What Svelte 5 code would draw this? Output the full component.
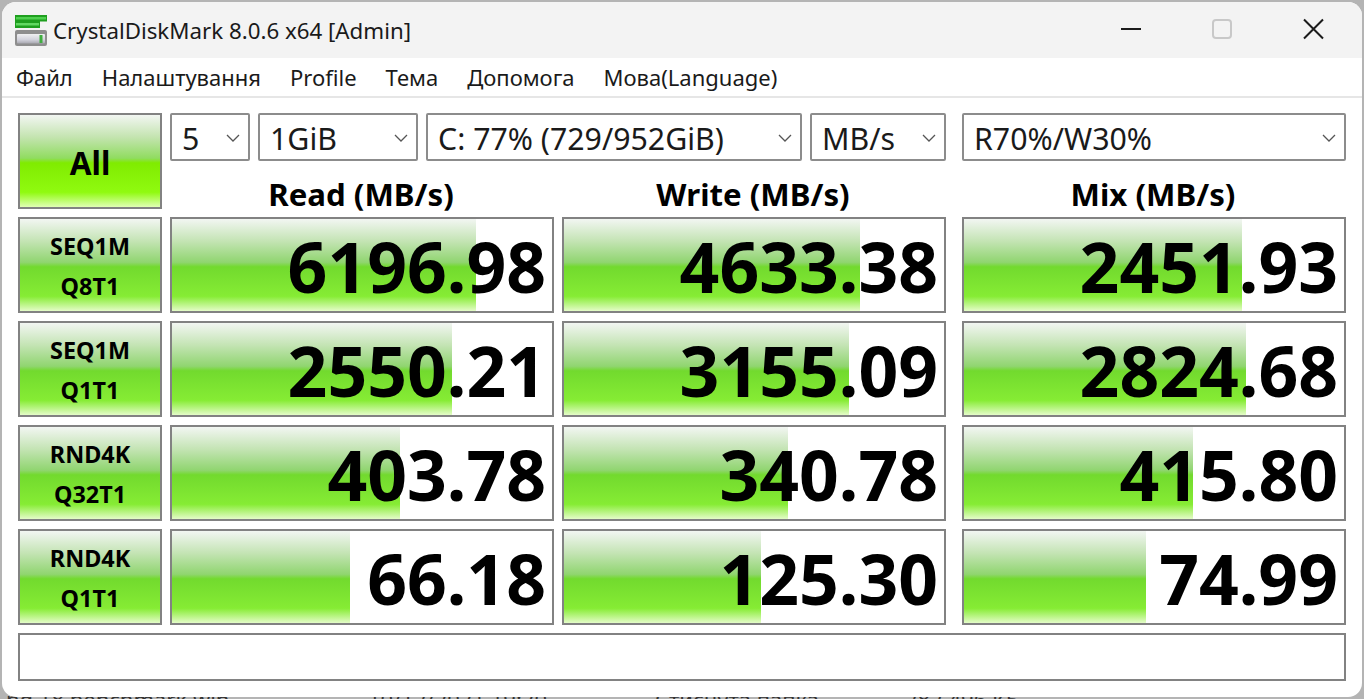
<script lang="ts">
  // CrystalDiskMark result window
  const menu = ["Файл", "Налаштування", "Profile", "Тема", "Допомога", "Мова(Language)"];

  const combos = [
    { label: "5", width: 80 },
    { label: "1GiB", width: 160 },
    { label: "C: 77% (729/952GiB)", width: 376 },
    { label: "MB/s", width: 136 },
  ];

  const rows = [
    { l1: "SEQ1M", l2: "Q8T1", cells: [{ v: "6196.98", bar: 304 }, { v: "4633.38", bar: 296 }, { v: "2451.93", bar: 278 }] },
    { l1: "SEQ1M", l2: "Q1T1", cells: [{ v: "2550.21", bar: 280 }, { v: "3155.09", bar: 285 }, { v: "2824.68", bar: 282 }] },
    { l1: "RND4K", l2: "Q32T1", cells: [{ v: "403.78", bar: 228 }, { v: "340.78", bar: 224 }, { v: "415.80", bar: 229 }] },
    { l1: "RND4K", l2: "Q1T1", cells: [{ v: "66.18", bar: 178 }, { v: "125.30", bar: 197 }, { v: "74.99", bar: 182 }] },
  ];
</script>

<div class="desktop">
  <div class="behind">
    <span class="b1">ng 18 benchmark win</span>
    <span class="b2">10/12/2021 19:20</span>
    <span class="b3">Стиснута папка</span>
    <span class="b4">282 496 КБ</span>
  </div>

  <div class="window">
    <header class="titlebar">
      <svg class="appicon" width="32" height="32" viewBox="0 0 32 32">
        <defs>
          <linearGradient id="disk" x1="0" y1="0" x2="0" y2="1">
            <stop offset="0" stop-color="#f0f0f2" />
            <stop offset="0.6" stop-color="#d2d2dc" />
            <stop offset="1" stop-color="#a8a8b0" />
          </linearGradient>
        </defs>
        <path d="M0 0h32v6.500h-7v6.500H0z" fill="#1f9f1f" />
        <rect x="1" y="2" width="30" height="2.500" fill="#4fd04f" />
        <rect x="1" y="8" width="23" height="2.500" fill="#62d862" />
        <rect x="0" y="15" width="32" height="16" rx="2" fill="#8e8e8e" />
        <rect x="2" y="19" width="28" height="9.500" rx="1" fill="url(#disk)" />
        <rect x="24.500" y="20" width="3" height="8" fill="#3fae3f" />
      </svg>
      <span class="title">CrystalDiskMark 8.0.6 x64 [Admin]</span>
      <div class="controls">
        <svg width="22" height="22" viewBox="0 0 22 22"><path d="M1 11h20" stroke="#1b1b1b" stroke-width="2" /></svg>
        <svg width="22" height="22" viewBox="0 0 22 22"><rect x="2" y="2" width="18" height="18" rx="3" fill="none" stroke="#c8c8c8" stroke-width="2" /></svg>
        <svg width="22" height="22" viewBox="0 0 22 22"><path d="M2 1.500l19 19M21 1.500l-19 19" stroke="#1b1b1b" stroke-width="2" fill="none" /></svg>
      </div>
    </header>

    <nav class="menubar">
      {#each menu as item}
        <span>{item}</span>
      {/each}
    </nav>

    <main class="body">
      <div class="grid top">
        <button class="green all"><span>All</span></button>
        <div class="combos">
          {#each combos as c}
            <div class="combo" style="width:{c.width}px">
              <span>{c.label}</span>
              <svg class="chev" width="14" height="8" viewBox="0 0 14 8"><path d="M1 1l6 6 6-6" fill="none" stroke="#555" stroke-width="1.3" /></svg>
            </div>
          {/each}
        </div>
        <div class="combo mix">
          <span>R70%/W30%</span>
          <svg class="chev" width="14" height="8" viewBox="0 0 14 8"><path d="M1 1l6 6 6-6" fill="none" stroke="#555" stroke-width="1.3" /></svg>
        </div>
        <div class="head">Read (MB/s)</div>
        <div class="head">Write (MB/s)</div>
        <div class="head mix">Mix (MB/s)</div>
      </div>

      {#each rows as row}
        <div class="grid">
          <button class="green label">
            <span>{row.l1}</span>
            <span>{row.l2}</span>
          </button>
          {#each row.cells as cell, i}
            <div class="cell" class:mix={i === 2}>
              <div class="bar" style="width:{cell.bar}px"></div>
              <span class="value">{cell.v}</span>
            </div>
          {/each}
        </div>
      {/each}

      <div class="comment"></div>
    </main>
  </div>
</div>

<style>
  :global(body) {
    margin: 0;
    background: #b4b4b4;
    overflow: hidden;
  }

  .desktop {
    position: relative;
    width: 1364px;
    height: 699px;
    padding: 2px;
    box-sizing: border-box;
    overflow: hidden;
    font-family: "Noto Sans", "Open Sans", sans-serif;
    color: #000;
  }

  .behind {
    position: absolute;
    left: 0;
    right: 0;
    top: 689px;
    font-size: 22px;
    line-height: 20px;
    color: #333;
  }
  .behind span {
    position: absolute;
    top: 0;
    white-space: nowrap;
  }
  .b1 { left: 6px; }
  .b2 { left: 368px; }
  .b3 { left: 655px; }
  .b4 { left: 905px; }

  .window {
    position: relative;
    width: 1360px;
    height: 695px;
    background: #fff;
    border-radius: 14px;
    overflow: hidden;
  }

  .titlebar {
    height: 56px;
    background: #f3f3f3;
    display: flex;
    align-items: center;
    padding-left: 13px;
    box-sizing: border-box;
  }
  .appicon {
    margin-right: 6px;
    margin-top: 1px;
  }
  .title {
    font-size: 22.3px;
    color: #1a1a1a;
    white-space: nowrap;
  }
  .controls {
    margin-left: auto;
    display: flex;
    gap: 69px;
    padding-right: 38px;
    margin-top: -2px;
  }

  .menubar {
    height: 40px;
    box-sizing: border-box;
    border-bottom: 2px solid #e6e6e6;
    display: flex;
    align-items: center;
    gap: 29px;
    padding-left: 14px;
    font-size: 22px;
    color: #1a1a1a;
    white-space: nowrap;
  }

  .body {
    padding: 15px 0 0 16px;
    display: flex;
    flex-direction: column;
    gap: 8px;
  }

  .grid {
    display: grid;
    grid-template-columns: 144px 384px 384px 392px;
    column-gap: 8px;
    height: 96px;
  }
  .grid.top {
    grid-template-rows: 48px 48px;
  }
  .mix {
    margin-left: 8px;
  }

  .green {
    box-sizing: border-box;
    border: 2px solid #828282;
    padding: 0;
    margin: 0;
    font-family: inherit;
    color: #000;
    font-weight: 700;
    background: linear-gradient(
      180deg,
      #f2f6f2 0%,
      #c4e4b4 24%,
      #90d570 47%,
      #72da2e 52%,
      #86ec34 84%,
      #e4fcc8 100%
    );
  }
  .all {
    grid-row: 1 / span 2;
    font-size: 31.5px;
    padding-top: 2px;
    background: linear-gradient(
      180deg,
      #f2f6f2 0%,
      #c4e4b0 24%,
      #90dc60 47%,
      #80ec00 52%,
      #90fa10 84%,
      #e0ffb4 100%
    );
  }
  .label {
    display: flex;
    flex-direction: column;
    align-items: center;
    justify-content: center;
    gap: 7px;
    padding-top: 2px;
    font-size: 23.4px;
    line-height: 33px;
  }

  .combos {
    grid-column: 2 / span 2;
    display: flex;
    gap: 8px;
  }
  .combo {
    box-sizing: border-box;
    height: 48px;
    border: 2px solid #8c8c8c;
    border-radius: 2px;
    display: flex;
    align-items: center;
    justify-content: space-between;
    padding: 2px 8px 0 10px;
    font-size: 30.3px;
    color: #1a1a1a;
    white-space: nowrap;
  }

  .head {
    display: flex;
    align-items: center;
    justify-content: center;
    padding-top: 17px;
    padding-right: 2px;
    font-size: 31.2px;
    font-weight: 700;
    white-space: nowrap;
  }

  .cell {
    position: relative;
    box-sizing: border-box;
    height: 96px;
    border: 2px solid #828282;
    display: flex;
    align-items: center;
    justify-content: flex-end;
    padding-top: 4px;
    padding-right: 6px;
  }
  .bar {
    position: absolute;
    left: 0;
    top: 0;
    bottom: 0;
    background: linear-gradient(
      180deg,
      #f2f6f2 0%,
      #c4e4b4 24%,
      #90d570 47%,
      #72da2e 52%,
      #86ec34 84%,
      #e4fcc8 100%
    );
  }
  .value {
    position: relative;
    font-size: 69.6px;
    font-weight: 700;
    line-height: 1;
  }

  .comment {
    box-sizing: border-box;
    width: 1328px;
    height: 48px;
    border: 2px solid #828282;
  }
</style>
